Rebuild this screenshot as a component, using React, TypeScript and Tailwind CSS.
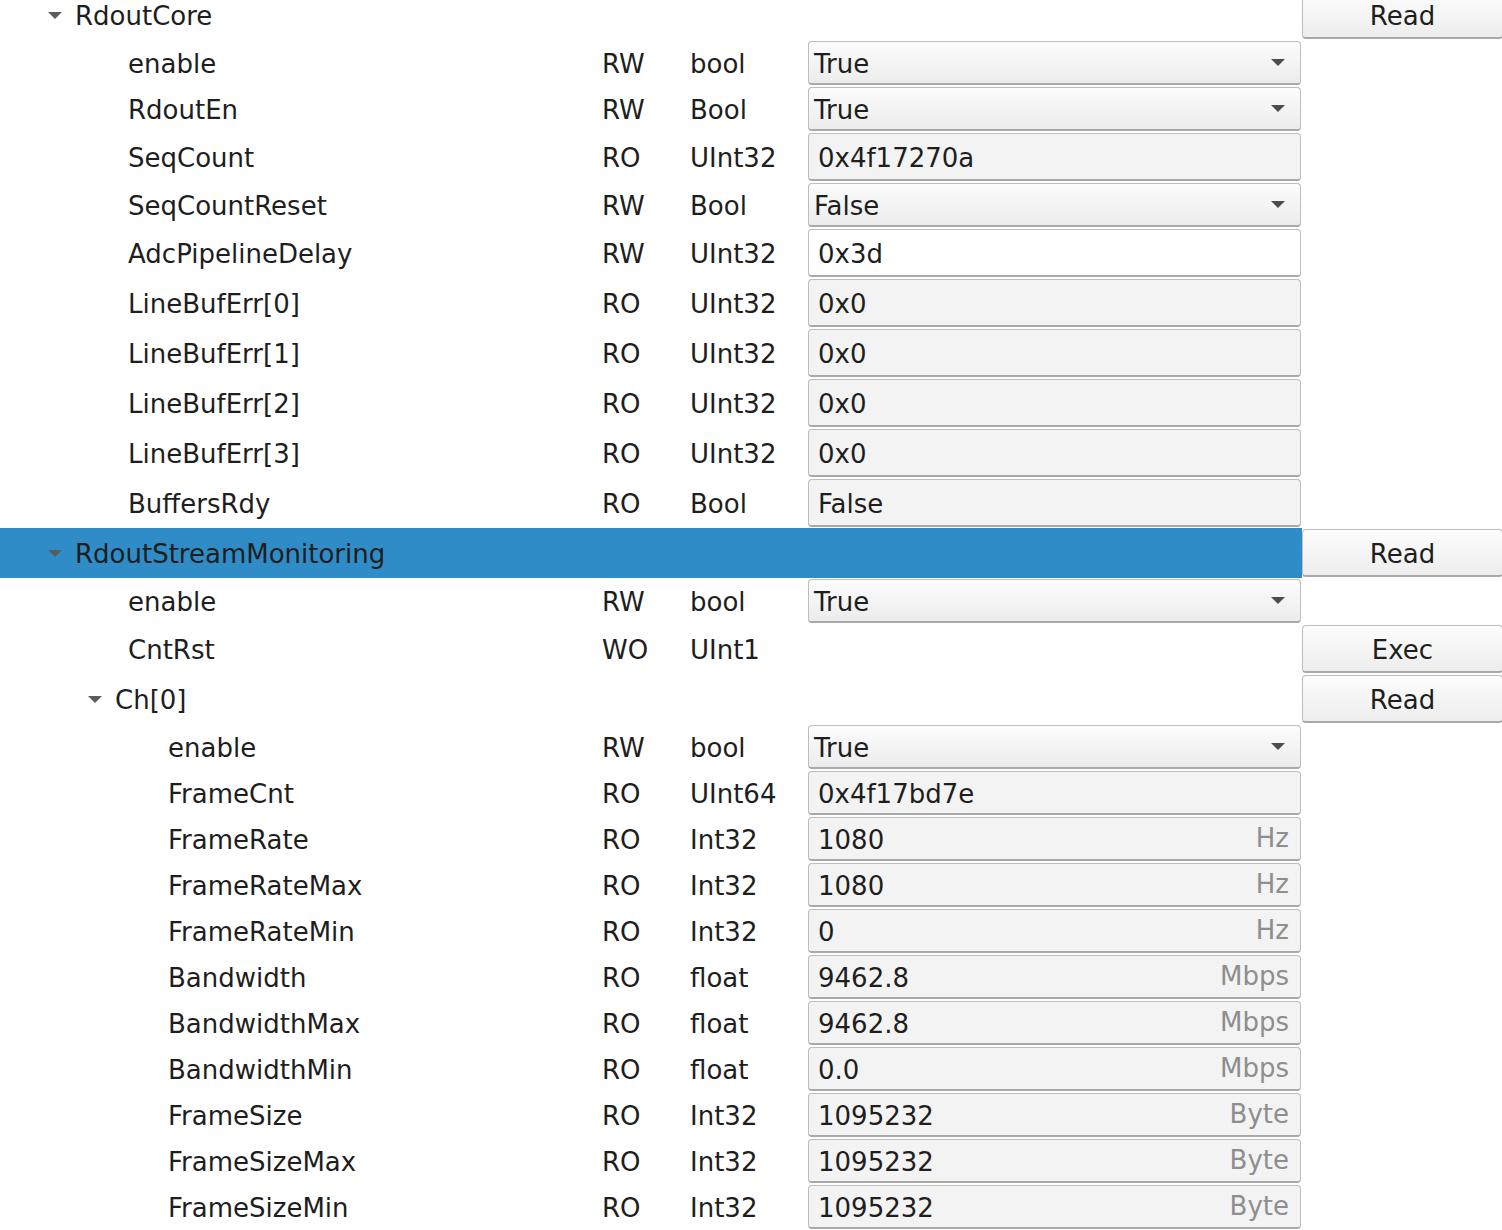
import type { ReactNode } from "react";

type Widget =
  | { kind: "combo"; value: string }
  | { kind: "edit"; value: string; unit?: string; editable?: boolean }
  | { kind: "none" };

interface Row {
  name: string;
  branch?: boolean;
  level: number;
  mode?: string;
  type?: string;
  widget: Widget;
  button?: string;
  tall?: boolean;
  selected?: boolean;
}

const rows: Row[] = [
  { name: "RdoutCore", branch: true, level: 0, widget: { kind: "none" }, button: "Read", tall: true },
  { name: "enable", level: 1, mode: "RW", type: "bool", widget: { kind: "combo", value: "True" } },
  { name: "RdoutEn", level: 1, mode: "RW", type: "Bool", widget: { kind: "combo", value: "True" } },
  { name: "SeqCount", level: 1, mode: "RO", type: "UInt32", widget: { kind: "edit", value: "0x4f17270a" }, tall: true },
  { name: "SeqCountReset", level: 1, mode: "RW", type: "Bool", widget: { kind: "combo", value: "False" } },
  { name: "AdcPipelineDelay", level: 1, mode: "RW", type: "UInt32", widget: { kind: "edit", value: "0x3d", editable: true }, tall: true },
  { name: "LineBufErr[0]", level: 1, mode: "RO", type: "UInt32", widget: { kind: "edit", value: "0x0" }, tall: true },
  { name: "LineBufErr[1]", level: 1, mode: "RO", type: "UInt32", widget: { kind: "edit", value: "0x0" }, tall: true },
  { name: "LineBufErr[2]", level: 1, mode: "RO", type: "UInt32", widget: { kind: "edit", value: "0x0" }, tall: true },
  { name: "LineBufErr[3]", level: 1, mode: "RO", type: "UInt32", widget: { kind: "edit", value: "0x0" }, tall: true },
  { name: "BuffersRdy", level: 1, mode: "RO", type: "Bool", widget: { kind: "edit", value: "False" }, tall: true },
  { name: "RdoutStreamMonitoring", branch: true, level: 0, widget: { kind: "none" }, button: "Read", tall: true, selected: true },
  { name: "enable", level: 1, mode: "RW", type: "bool", widget: { kind: "combo", value: "True" } },
  { name: "CntRst", level: 1, mode: "WO", type: "UInt1", widget: { kind: "none" }, button: "Exec", tall: true },
  { name: "Ch[0]", branch: true, level: 1, widget: { kind: "none" }, button: "Read", tall: true },
  { name: "enable", level: 2, mode: "RW", type: "bool", widget: { kind: "combo", value: "True" } },
  { name: "FrameCnt", level: 2, mode: "RO", type: "UInt64", widget: { kind: "edit", value: "0x4f17bd7e" } },
  { name: "FrameRate", level: 2, mode: "RO", type: "Int32", widget: { kind: "edit", value: "1080", unit: "Hz" } },
  { name: "FrameRateMax", level: 2, mode: "RO", type: "Int32", widget: { kind: "edit", value: "1080", unit: "Hz" } },
  { name: "FrameRateMin", level: 2, mode: "RO", type: "Int32", widget: { kind: "edit", value: "0", unit: "Hz" } },
  { name: "Bandwidth", level: 2, mode: "RO", type: "float", widget: { kind: "edit", value: "9462.8", unit: "Mbps" } },
  { name: "BandwidthMax", level: 2, mode: "RO", type: "float", widget: { kind: "edit", value: "9462.8", unit: "Mbps" } },
  { name: "BandwidthMin", level: 2, mode: "RO", type: "float", widget: { kind: "edit", value: "0.0", unit: "Mbps" } },
  { name: "FrameSize", level: 2, mode: "RO", type: "Int32", widget: { kind: "edit", value: "1095232", unit: "Byte" } },
  { name: "FrameSizeMax", level: 2, mode: "RO", type: "Int32", widget: { kind: "edit", value: "1095232", unit: "Byte" } },
  { name: "FrameSizeMin", level: 2, mode: "RO", type: "Int32", widget: { kind: "edit", value: "1095232", unit: "Byte" } },
];

function Arrow({ className }: { className: string }) {
  return (
    <svg width="14" height="7" viewBox="0 0 14 7" className={className}>
      <path d="M0 0 H14 L7 7 Z" fill="currentColor" />
    </svg>
  );
}

function NameCell({ row }: { row: Row }) {
  if (row.branch) {
    const pad = row.level === 0 ? "pl-[48px]" : "pl-[88px]";
    return (
      <div className={`flex items-center pt-[2px] ${pad}`}>
        <Arrow className="-translate-y-[1px] text-[#5c5c5c]" />
        <span className="ml-[13px]">{row.name}</span>
      </div>
    );
  }
  const pad = row.level === 1 ? "pl-[128px]" : "pl-[168px]";
  return <div className={`flex items-center pt-[2px] ${pad}`}>{row.name}</div>;
}

function Box({ className, children }: { className: string; children: ReactNode }) {
  return (
    <div
      className={`flex h-full items-center rounded-[4px] border border-b-2 border-[#bdbdbd] border-b-[#a9a9a9] pt-[2px] ${className}`}
    >
      {children}
    </div>
  );
}

function ValueCell({ w }: { w: Widget }) {
  if (w.kind === "combo") {
    return (
      <Box className="bg-gradient-to-b from-[#fcfcfc] to-[#ececec] pl-[5px] pr-[15px]">
        <span className="flex-1">{w.value}</span>
        <Arrow className="-translate-y-[1px] text-[#4d4d4d]" />
      </Box>
    );
  }
  if (w.kind === "edit") {
    return (
      <Box className={`${w.editable ? "bg-white" : "bg-[#f3f3f3]"} pl-[9px] pr-[11px]`}>
        <span className="flex-1">{w.value}</span>
        {w.unit && <span className="-translate-y-[2px] text-[#8e8e8e]">{w.unit}</span>}
      </Box>
    );
  }
  return null;
}

function TreeRow({ row }: { row: Row }) {
  const height = row.tall ? "h-[50px]" : "h-[46px]";
  const sel = row.selected ? "bg-[#308cc7]" : "";
  return (
    <div className={`grid grid-cols-[602px_88px_118px_494px_201px] ${height}`}>
      <div className={`col-span-4 grid grid-cols-[602px_88px_118px_494px] ${sel}`}>
        <NameCell row={row} />
        <div className="flex items-center pt-[2px]">{row.mode}</div>
        <div className="flex items-center pt-[2px]">{row.type}</div>
        <div className="py-[1px] pr-[1px]">
          <ValueCell w={row.widget} />
        </div>
      </div>
      <div className="py-[1px]">
        {row.button && (
          <button className="flex h-full w-full items-center justify-center rounded-[4px] border border-b-2 border-[#bdbdbd] border-b-[#a9a9a9] bg-gradient-to-b from-[#fdfdfd] to-[#ededed] pt-[2px] text-[#1e1e1e]">
            {row.button}
          </button>
        )}
      </div>
    </div>
  );
}

export default function App() {
  return (
    <div className="h-[1230px] w-[1502px] overflow-hidden bg-white font-['DejaVu_Sans',sans-serif] text-[26px] leading-none text-[#1e1e1e]">
      <div className="-mt-[10px]">
        {rows.map((row, i) => (
          <TreeRow key={i} row={row} />
        ))}
      </div>
    </div>
  );
}
